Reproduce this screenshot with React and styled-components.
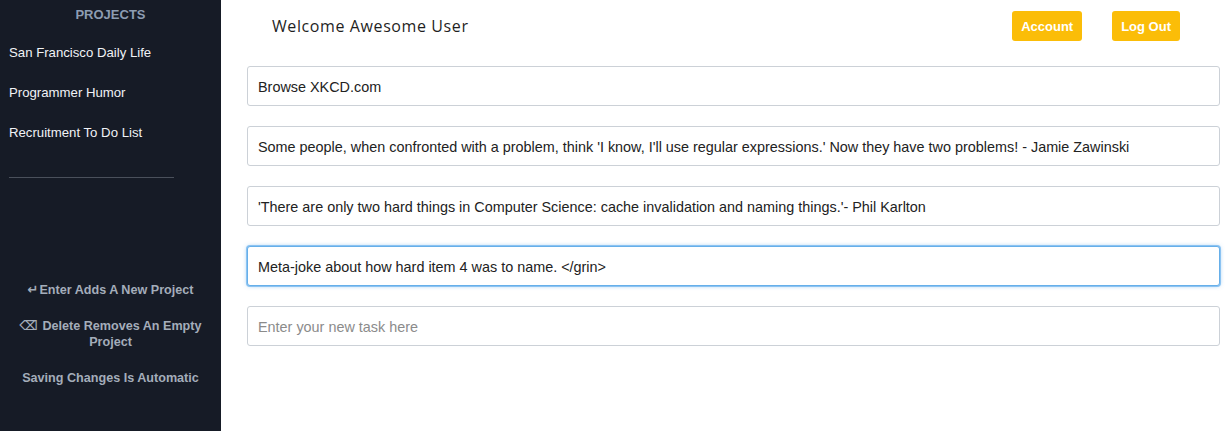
import React from 'react';
import styled, { createGlobalStyle } from 'styled-components';

const GlobalStyle = createGlobalStyle`
  html, body {
    margin: 0;
    padding: 0;
    background: #ffffff;
    font-family: "Liberation Sans", Arial, sans-serif;
  }
  * {
    box-sizing: border-box;
  }
`;

const Layout = styled.div`
  display: flex;
  width: 100%;
  height: 100vh;
`;

const Sidebar = styled.aside`
  width: 221px;
  flex-shrink: 0;
  background: #161b26;
  display: flex;
  flex-direction: column;
`;

const SidebarTitle = styled.div`
  text-align: center;
  color: #8d9db2;
  font-weight: 700;
  font-size: 13px;
  line-height: 16px;
  padding-top: 7px;
  margin-bottom: 10px;
`;

const ProjectItem = styled.div`
  color: #f1f3f6;
  font-size: 13.2px;
  line-height: 40px;
  padding-left: 9px;
`;

const Divider = styled.hr`
  margin: 24px 0 0 9px;
  width: 165px;
  border: none;
  border-top: 1px solid #4a505b;
`;

const Hints = styled.div`
  margin-top: 104px;
  display: flex;
  flex-direction: column;
  gap: 20px;
  padding: 0 18px;
`;

const Hint = styled.div`
  text-align: center;
  color: #a4adba;
  font-weight: 700;
  font-size: 12.6px;
  line-height: 16px;
`;

const Glyph = styled.span`
  font-family: "DejaVu Sans", sans-serif;
  font-weight: 700;
  font-size: 13px;
  margin-right: 1px;
`;

const Main = styled.main`
  flex: 1;
  padding: 0 5px 0 26px;
`;

const Header = styled.header`
  display: flex;
  align-items: center;
  height: 52px;
  padding-left: 25px;
`;

const Welcome = styled.h1`
  margin: 0;
  flex: 1;
  font-family: "Open Sans", sans-serif;
  font-weight: 500;
  font-size: 16px;
  color: #1f1f1f;
  letter-spacing: 0.6px;
`;

const Actions = styled.div`
  display: flex;
  gap: 30px;
  margin-right: 40px;
`;

const ActionButton = styled.button`
  background: #fbbd08;
  color: #ffffff;
  border: none;
  border-radius: 3px;
  height: 30px;
  padding: 0 9px;
  font-family: "Liberation Sans", Arial, sans-serif;
  font-weight: 700;
  font-size: 13px;
  cursor: pointer;
`;

const TaskList = styled.div`
  display: flex;
  flex-direction: column;
  gap: 20px;
  margin-top: 14px;
`;

const TaskInput = styled.input`
  width: 100%;
  height: 40px;
  padding: 1px 10px 0;
  border: 1px solid ${({ $focused }) => ($focused ? '#66afe9' : '#ccd1d7')};
  border-radius: 3px;
  font-family: "Liberation Sans", Arial, sans-serif;
  font-size: 14.4px;
  color: #222;
  outline: none;
  box-shadow: ${({ $focused }) =>
    $focused ? '0 0 0 1px #8cc3f2, 0 0 4px rgba(102, 175, 233, 0.7)' : 'none'};

  &::placeholder {
    color: #8b8b8b;
  }
`;

const projects = ['San Francisco Daily Life', 'Programmer Humor', 'Recruitment To Do List'];

const tasks = [
  'Browse XKCD.com',
  "Some people, when confronted with a problem, think 'I know, I'll use regular expressions.' Now they have two problems! - Jamie Zawinski",
  "'There are only two hard things in Computer Science: cache invalidation and naming things.'- Phil Karlton",
  'Meta-joke about how hard item 4 was to name. </grin>',
];

export default function App() {
  return (
    <>
      <GlobalStyle />
      <Layout>
        <Sidebar>
          <SidebarTitle>PROJECTS</SidebarTitle>
          {projects.map((p) => (
            <ProjectItem key={p}>{p}</ProjectItem>
          ))}
          <Divider />
          <Hints>
            <Hint>
              <Glyph>↵</Glyph>Enter Adds A New Project
            </Hint>
            <Hint>
              <Glyph>⌫</Glyph> Delete Removes An Empty Project
            </Hint>
            <Hint>Saving Changes Is Automatic</Hint>
          </Hints>
        </Sidebar>
        <Main>
          <Header>
            <Welcome>Welcome Awesome User</Welcome>
            <Actions>
              <ActionButton>Account</ActionButton>
              <ActionButton>Log Out</ActionButton>
            </Actions>
          </Header>
          <TaskList>
            {tasks.map((t, i) => (
              <TaskInput key={i} defaultValue={t} $focused={i === 3} />
            ))}
            <TaskInput placeholder="Enter your new task here" />
          </TaskList>
        </Main>
      </Layout>
    </>
  );
}
